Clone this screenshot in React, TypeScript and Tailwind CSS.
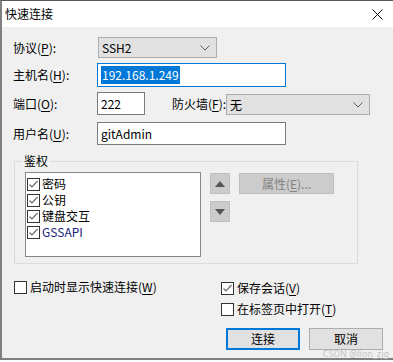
import React from "react";

const F = { fontFamily: '"Noto Sans CJK SC", "Noto Sans", sans-serif' };

function Chevron() {
  return (
    <svg width="10" height="6" viewBox="0 0 10 6" className="shrink-0">
      <path d="M0.5 0.5 L5 5 L9.5 0.5" fill="none" stroke="#606060" strokeWidth="1" />
    </svg>
  );
}

function Check({ checked }: { checked: boolean }) {
  return (
    <div className="w-[13px] h-[13px] border border-[#333333] bg-white shrink-0 flex items-center justify-center">
      {checked && (
        <svg width="11" height="11" viewBox="0 0 11 11">
          <path d="M1.5 5.5 L4 8 L9.5 2" fill="none" stroke="#6a6a6a" strokeWidth="1.2" />
        </svg>
      )}
    </div>
  );
}

function Mn({ pre, k, post = "" }: { pre: string; k: string; post?: string }) {
  return (
    <span className="whitespace-nowrap">
      {pre}(<span className="underline underline-offset-2">{k}</span>){post}
    </span>
  );
}

export default function App() {
  return (
    <div className="w-[393px] h-[362px] bg-white text-[12px] text-black leading-none" style={F}>
      <div className="relative w-[393px] h-[360px] bg-[#f0f0f0] border-l-2 border-b-2 border-t border-l-[#7f7f7f] border-b-[#7f7f7f] border-t-[#5a5a5a] flex flex-col">
        {/* title bar */}
        <div className="h-[26px] bg-white flex items-center justify-between pl-[3px] pr-[10px]">
          <span className="text-[12px]">快速连接</span>
          <svg width="11" height="11" viewBox="0 0 11 11">
            <path d="M0.5 0.5 L10.5 10.5 M10.5 0.5 L0.5 10.5" stroke="#111" strokeWidth="1" />
          </svg>
        </div>

        <div className="flex flex-col pl-[11px]">
          {/* row 1 */}
          <div className="mt-[10px] h-[21px] flex items-center">
            <div className="w-[85px]"><Mn pre="协议" k="P" post=":" /></div>
            <div className="w-[119px] h-[21px] bg-[#e1e1e1] border border-[#adadad] flex items-center justify-between pl-[3px] pr-[6px]">
              <span>SSH2</span>
              <Chevron />
            </div>
          </div>
          {/* row 2 */}
          <div className="mt-[5px] h-[24px] flex items-center">
            <div className="w-[84px]"><Mn pre="主机名" k="H" post=":" /></div>
            <div className="w-[189px] h-[24px] bg-white border border-[#0078d7] flex items-center pl-[3px]">
              <span className="bg-[#0078d7] text-white px-px py-[3px]">192.168.1.249</span>
            </div>
          </div>
          {/* row 3 */}
          <div className="mt-[5px] h-[23px] flex items-center">
            <div className="w-[84px]"><Mn pre="端口" k="O" post=":" /></div>
            <div className="w-[48px] h-[23px] bg-white border border-[#7a7a7a] flex items-center pl-[3px]">222</div>
            <div className="ml-[27px] w-[54px]"><Mn pre="防火墙" k="F" post=":" /></div>
            <div className="w-[144px] h-[21px] mt-[2px] bg-[#e1e1e1] border border-[#adadad] flex items-center justify-between pl-[3px] pr-[6px]">
              <span>无</span>
              <Chevron />
            </div>
          </div>
          {/* row 4 */}
          <div className="mt-[7px] h-[23px] flex items-center">
            <div className="w-[84px]"><Mn pre="用户名" k="U" post=":" /></div>
            <div className="w-[189px] h-[23px] bg-white border border-[#7a7a7a] flex items-center pl-[3px]">gitAdmin</div>
          </div>

          {/* group */}
          <div className="relative mt-[16px] ml-px w-[344px] h-[103px] border border-[#dcdcdc] flex pl-[10px] pt-[10px]">
            <span className="absolute -top-[8px] left-[7px] bg-[#f0f0f0] px-[2px] text-[12px] leading-[14px]">鉴权</span>
            <div className="w-[176px] h-[85px] bg-white border border-[#828790] flex flex-col pt-[3px] pl-px">
              {[
                ["密码", false],
                ["公钥", false],
                ["键盘交互", false],
                ["GSSAPI", true],
              ].map(([t, blue], i) => (
                <div key={i} className="h-[16px] flex items-center gap-[2px]">
                  <Check checked />
                  <span className={blue ? "text-[#1a237e]" : ""} >{t as string}</span>
                </div>
              ))}
            </div>
            <div className="ml-[9px] mt-px flex flex-col gap-[7px]">
              <div className="w-[20px] h-[21px] bg-[#cccccc] border border-[#bfbfbf] flex items-center justify-center">
                <svg width="10" height="6" viewBox="0 0 10 6"><path d="M0 6 L5 0 L10 6 Z" fill="#555" /></svg>
              </div>
              <div className="w-[20px] h-[21px] bg-[#cccccc] border border-[#bfbfbf] flex items-center justify-center">
                <svg width="10" height="6" viewBox="0 0 10 6"><path d="M0 0 L10 0 L5 6 Z" fill="#555" /></svg>
              </div>
            </div>
            <div className="ml-[9px] mt-px w-[95px] h-[21px] bg-[#cccccc] border border-[#bfbfbf] flex items-center justify-center text-[#838383]">
              <Mn pre="属性" k="E" post="..." />
            </div>
          </div>

          {/* options */}
          <div className="mt-[17px] flex">
            <div className="w-[208px] h-[14px] flex items-start pl-px gap-[3px]">
              <Check checked={false} />
              <Mn pre="启动时显示快速连接" k="W" />
            </div>
            <div className="flex flex-col gap-[7px]">
              <div className="h-[14px] flex items-center gap-[3px]">
                <Check checked />
                <Mn pre="保存会话" k="V" />
              </div>
              <div className="h-[14px] flex items-center gap-[3px]">
                <Check checked={false} />
                <Mn pre="在标签页中打开" k="T" />
              </div>
            </div>
          </div>

          {/* buttons */}
          <div className="mt-[12px] ml-[213px] flex gap-[9px]">
            <div className="w-[74px] h-[22px] bg-[#e1e1e1] border-2 border-[#0078d7] flex items-center justify-center">连接</div>
            <div className="w-[74px] h-[22px] bg-[#e1e1e1] border border-[#adadad] flex items-center justify-center">取消</div>
          </div>
        </div>

        <span className="absolute right-[4px] bottom-0 text-[9px] leading-[9px] text-[#c4c4c4]" style={{ fontFamily: '"Noto Sans", sans-serif' }}>
          CSDN @lion_zjg
        </span>
      </div>
    </div>
  );
}
